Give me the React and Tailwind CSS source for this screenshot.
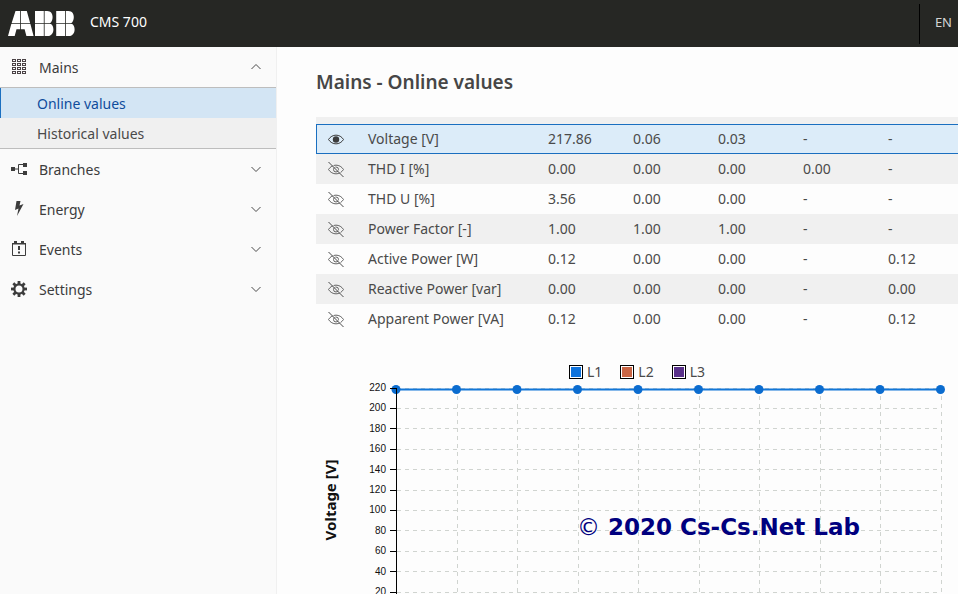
import React from "react";

const ui = "font-['Noto_Sans','Liberation_Sans',sans-serif]";

function AbbLogo() {
  return (
    <svg width="68" height="26" viewBox="0 0 68 26" role="img" aria-label="ABB" fill="#fff">
      <path d="M7.5 0H12.2V12.2H3.6ZM13 0H18.8L22.2 12.2H13ZM3.3 13H12.2V18.3H8.5L6.7 25H0ZM13 13H22.4L25.6 25H18.4L16.6 18.3H13Z" />
      <path d="M27 0H35.8V12.2H27ZM36.6 0H39.2C43 0 44.6 2.8 44.6 6C44.6 9 43.6 11.2 42 12.2H36.6ZM27 13H35.8V25H27ZM36.6 13H43C44.600 14 45.400 16 45.400 18.400C45.400 22.400 43 25 39.500 25H36.600Z" />
      <path d="M48.200 0H57V12.200H48.200ZM57.800 0H60.400C64.200 0 65.800 2.800 65.800 6C65.800 9 64.800 11.200 63.200 12.200H57.800ZM48.200 13H57V25H48.200ZM57.800 13H64.200C65.800 14 66.600 16 66.600 18.400C66.600 22.400 64.200 25 60.700 25H57.800Z" />
    </svg>
  );
}

function GridIcon() {
  const cells = [];
  for (let r = 0; r < 4; r++) {
    for (let c = 0; c < 3; c++) {
      cells.push(<rect key={`${r}-${c}`} x={2.5 + c * 5} y={1.5 + r * 4} width="3" height="2" />);
    }
  }
  return (
    <svg width="18" height="18" viewBox="0 0 18 18" fill="none" stroke="#4a4245" strokeWidth="1">
      {cells}
    </svg>
  );
}

function BranchIcon() {
  return (
    <svg width="18" height="18" viewBox="0 0 18 18" fill="#3c3c3c">
      <path d="M1 7h4v4H1zM13 3h4v4h-4zM13 11h4v4h-4z" />
      <path d="M5 9h3.500M13 4.500H8.500v9H13" fill="none" stroke="#3c3c3c" />
    </svg>
  );
}

function BoltIcon() {
  return (
    <svg width="18" height="18" viewBox="0 0 18 18" fill="#3c3c3c">
      <path d="M6.500 1H10.500L9.500 5.500 13.500 4 7 16 8.500 8.500 5 10Z" />
    </svg>
  );
}

function EventIcon() {
  return (
    <svg width="18" height="18" viewBox="0 0 18 18" fill="#3c3c3c">
      <path d="M2.500 3.500h13v12h-13z" fill="none" stroke="#3c3c3c" />
      <path d="M2 3h14v1.500H2zM4 1h3v3H4zM11 1h3v3h-3zM8 6h2v4H8zM8 11.500h2v2H8z" />
    </svg>
  );
}

function GearIcon() {
  const teeth = [0, 45, 90, 135, 180, 225, 270, 315];
  return (
    <svg width="18" height="18" viewBox="0 0 18 18" fill="#3c3c3c">
      {teeth.map((a) => (
        <path key={a} d="M7.600 1h2.800v4H7.600z" transform={`rotate(${a} 9 9)`} />
      ))}
      <circle cx="9" cy="9" r="4.600" fill="none" stroke="#3c3c3c" strokeWidth="2.200" />
    </svg>
  );
}

function Chevron({ up }) {
  return (
    <svg width="12" height="8" viewBox="0 0 12 8" fill="none" stroke="#4a4a4a">
      <path d={up ? "M1.500 6 6 1.500l4.500 4.500" : "M1.500 2 6 6.500l4.500-4.500"} />
    </svg>
  );
}

function EyeIcon({ off }) {
  return (
    <svg className="mx-auto block" width="18" height="18" viewBox="0 0 18 18" fill="none" stroke={off ? "#666" : "#3c3c3c"}>
      <path d="M1.500 9.500C5 3.700 13 3.700 16.500 9.500C13 15.300 5 15.300 1.500 9.500Z" />
      {off ? (
        <>
          <circle cx="9" cy="9.500" r="2.500" />
          <path d="M2.500 2 17 16.500" stroke="#fafafa" />
          <path d="M1.500 2 16.500 17" stroke="#4a4a4a" />
        </>
      ) : (
        <circle cx="9" cy="9.500" r="3.200" fill="#3c3c3c" stroke="none" />
      )}
    </svg>
  );
}

function MenuItem({ icon, label, open }) {
  return (
    <button type="button" aria-expanded={!!open} className="flex h-10 w-full items-center gap-[11px] pl-[10px] pr-[14px] text-left text-[14px] text-[#3c3c3c]">
      {icon}
      <span className="grow">{label}</span>
      <Chevron up={open} />
    </button>
  );
}

const rows = [
  ["Voltage [V]", "217.86", "0.06", "0.03", "-", "-"],
  ["THD I [%]", "0.00", "0.00", "0.00", "0.00", "-"],
  ["THD U [%]", "3.56", "0.00", "0.00", "-", "-"],
  ["Power Factor [-]", "1.00", "1.00", "1.00", "-", "-"],
  ["Active Power [W]", "0.12", "0.00", "0.00", "-", "0.12"],
  ["Reactive Power [var]", "0.00", "0.00", "0.00", "-", "0.00"],
  ["Apparent Power [VA]", "0.12", "0.00", "0.00", "-", "0.12"],
];

function ValuesTable() {
  return (
    <div className="flex h-[217px] flex-col justify-end overflow-hidden">
      <table className="w-full shrink-0 table-fixed border-separate border-spacing-0 text-left text-[14px] leading-5 text-[#4a4a4a]">
        <colgroup>
          <col className="w-10" />
          <col className="w-[180px]" />
          <col className="w-[85px]" />
          <col className="w-[85px]" />
          <col className="w-[85px]" />
          <col className="w-[85px]" />
          <col />
        </colgroup>
        <tbody>
          <tr className="bg-[#f0f0f0]">
            <td className="h-[30px] p-0"><EyeIcon off /></td>
            <td colSpan={6} />
          </tr>
          {rows.map(([label, ...values], i) => {
            const selected = i === 0;
            const edge = selected ? "border-y border-[#1a6fc0]" : "";
            return (
              <tr key={label} className={selected ? "bg-[#dcecf9]" : i % 2 ? "bg-[#f0f0f0]" : ""}>
                <td className={`h-[30px] p-0 ${edge} ${selected ? "border-l pr-px" : ""}`}><EyeIcon off={!selected} /></td>
                <th scope="row" className={`p-0 pl-3 font-normal ${edge}`}>{label}</th>
                {values.map((v, k) => (
                  <td key={k} className={`p-0 pl-3 ${edge}`}>{v}</td>
                ))}
              </tr>
            );
          })}
        </tbody>
      </table>
    </div>
  );
}

const ticks = [220, 200, 180, 160, 140, 120, 100, 80, 60, 40, 20];
const points = [0, 1, 2, 3, 4, 5, 6, 7, 8, 9];

function Chart() {
  return (
    <svg className="block w-full overflow-visible" viewBox="0 0 642 214" preserveAspectRatio="xMinYMin" role="img" aria-label="Voltage chart">
      <g stroke="#d0d4d0" strokeDasharray="4 4" shapeRendering="crispEdges">
        {ticks.map((t, i) => (
          <line key={t} x1="81" x2="625" y1={8 + i * 20.4} y2={8 + i * 20.4} />
        ))}
        {points.slice(1).map((p) => (
          <line key={p} x1={80.5 + p * 60.5} x2={80.5 + p * 60.5} y1="8" y2="214" />
        ))}
      </g>
      <line x1="80" x2="625" y1="9.500" y2="9.500" stroke="#1277d8" strokeWidth="2" />
      {points.map((p) => (
        <circle key={p} cx={80 + p * 60.5} cy="9.500" r="4.500" fill="#0b6ccf" />
      ))}
      <g stroke="#000" shapeRendering="crispEdges">
        <line x1="80.5" x2="80.5" y1="8" y2="214" />
        {ticks.map((t, i) => (
          <line key={t} x1="74" x2="81" y1={8 + i * 20.4} y2={8 + i * 20.4} />
        ))}
      </g>
      <g className="font-['Liberation_Sans',Arial,sans-serif] text-[10px]" textAnchor="end" fill="#111">
        {ticks.map((t, i) => (
          <text key={t} x="70" y={11 + i * 20.4}>{t}</text>
        ))}
      </g>
      <text x="20" y="120" transform="rotate(-90 20 120)" textAnchor="middle" className="text-[15px] font-bold" fill="#111">Voltage [V]</text>
    </svg>
  );
}

const legend = [
  ["L1", "bg-[#0f73dc]"],
  ["L2", "bg-[#c96544]"],
  ["L3", "bg-[#59318a]"],
];

export default function App() {
  return (
    <div className={`flex h-screen flex-col overflow-hidden bg-[#fdfdfd] ${ui}`}>
      <header className="flex h-[47px] shrink-0 items-center bg-[#262724] pl-2 text-[14px] text-white">
        <AbbLogo />
        <span className="grow pb-1 pl-[14px]">CMS 700</span>
        <button type="button" className="h-10 border-l border-black pb-px pl-[15px] pr-[6px] text-[13px] text-[#d4d4d4]">EN</button>
      </header>
      <div className="flex min-h-0 grow">
        <nav className="w-[277px] shrink-0 border-r border-[#f0f0f0] bg-[#fafafa]">
          <MenuItem icon={<GridIcon />} label="Mains" open />
          <div className="border-y border-[#bdbdbd] text-[14px]">
            <a href="#online" className="flex h-[30px] items-center border-l border-[#1a6fc0] bg-[#d3e5f4] pl-9 text-[#0f4c9c]">Online values</a>
            <a href="#historical" className="flex h-[30px] items-center bg-[#f0f0f0] pl-[37px] text-[#4a4a4a]">Historical values</a>
          </div>
          <MenuItem icon={<BranchIcon />} label="Branches" />
          <MenuItem icon={<BoltIcon />} label="Energy" />
          <MenuItem icon={<EventIcon />} label="Events" />
          <MenuItem icon={<GearIcon />} label="Settings" />
        </nav>
        <main className="min-w-0 grow pl-[39px]">
          <h1 className="flex h-[70px] items-center text-[19px] font-semibold text-[#464646]">Mains - Online values</h1>
          <ValuesTable />
          <div className="flex h-[46px] items-end justify-center text-[14px] leading-4 text-[#4a4a4a]">
            <ul className="flex gap-[18px]">
              {legend.map(([name, color]) => (
                <li key={name} className="flex items-center gap-1">
                  <span className={`size-[14px] border border-black shadow-[inset_0_0_0_1px_#fff] ${color}`} />
                  {name}
                </li>
              ))}
            </ul>
          </div>
          <div className="relative">
            <Chart />
            <p className="absolute left-[261px] top-[131px] whitespace-nowrap font-['DejaVu_Sans',Verdana,sans-serif] text-[23px] font-bold leading-8 text-[#00007f]"><span className="font-normal">©</span> 2020 Cs-Cs.Net Lab</p>
          </div>
        </main>
      </div>
    </div>
  );
}
